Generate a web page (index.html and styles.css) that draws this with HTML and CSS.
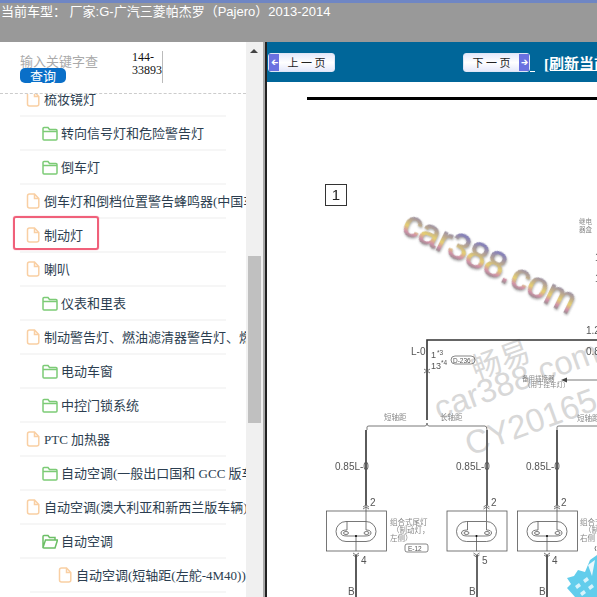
FILE: index.html
```html
<!DOCTYPE html>
<html lang="zh-CN">
<head>
    <meta charset="UTF-8">
    <meta name="viewport" content="width=device-width, initial-scale=1.0">
    <title>当前车型</title>
    <link rel="stylesheet" href="styles.css">
</head>
<body>
    <svg class="defs" width="0" height="0">
        <symbol id="file" viewBox="0 0 14 16">
            <path d="M1.5 3 Q1.5 1 3.5 1 H8.5 L12.8 5.5 V13 Q12.8 15 10.8 15 H3.5 Q1.5 15 1.5 13 Z M8.5 1 V5.5 H12.8" fill="none" stroke="#f9cfa3" stroke-width="1.5"/>
        </symbol>
        <symbol id="folder" viewBox="0 0 16 15">
            <path d="M1 13 V2.5 Q1 1.5 2 1.5 H6 L7.5 3.5 H14 Q15 3.5 15 4.5 V13 Q15 14 14 14 H2 Q1 14 1 13 Z M1 5.5 H15" fill="none" stroke="#7ccb76" stroke-width="1.5"/>
        </symbol>
        <symbol id="folder-open" viewBox="0 0 16 15">
            <path d="M1 13 V2.5 Q1 1.5 2 1.5 H6 L7.5 3.5 H13 V6 M1 13.5 L3.5 6 H15.5 L13 14 H2 Z" fill="none" stroke="#6cbf66" stroke-width="1.5"/>
        </symbol>
    </svg>

    <div class="topbar">当前车型： 厂家:G-广汽三菱帕杰罗（Pajero）2013-2014</div>

    <div class="main">
        <div class="sidebar">
            <div class="side-col">
                <div class="search">
                    <div class="search-left">
                        <div class="placeholder">输入关键字查</div>
                        <div class="search-btn">查询</div>
                    </div>
                    <div class="counter">144-<br>33893</div>
                </div>
                <div class="tree">
                    <ul class="tree-list">
                        <li class="row"><svg class="icon-file"><use href="#file"/></svg><span>梳妆镜灯</span></li>
                        <li class="row sub"><svg class="icon-folder"><use href="#folder"/></svg><span>转向信号灯和危险警告灯</span></li>
                        <li class="row sub"><svg class="icon-folder"><use href="#folder"/></svg><span>倒车灯</span></li>
                        <li class="row"><svg class="icon-file"><use href="#file"/></svg><span>倒车灯和倒档位置警告蜂鸣器(中国车型)</span></li>
                        <li class="row marked"><svg class="icon-file"><use href="#file"/></svg><span>制动灯</span></li>
                        <li class="row"><svg class="icon-file"><use href="#file"/></svg><span>喇叭</span></li>
                        <li class="row sub"><svg class="icon-folder"><use href="#folder"/></svg><span>仪表和里表</span></li>
                        <li class="row"><svg class="icon-file"><use href="#file"/></svg><span>制动警告灯、燃油滤清器警告灯、燃油</span></li>
                        <li class="row sub"><svg class="icon-folder"><use href="#folder"/></svg><span>电动车窗</span></li>
                        <li class="row sub"><svg class="icon-folder"><use href="#folder"/></svg><span>中控门锁系统</span></li>
                        <li class="row"><svg class="icon-file"><use href="#file"/></svg><span>PTC 加热器</span></li>
                        <li class="row sub"><svg class="icon-folder"><use href="#folder"/></svg><span>自动空调(一般出口国和 GCC 版车辆)</span></li>
                        <li class="row"><svg class="icon-file"><use href="#file"/></svg><span>自动空调(澳大利亚和新西兰版车辆)</span></li>
                        <li class="row sub"><svg class="icon-folder"><use href="#folder-open"/></svg><span>自动空调</span></li>
                        <li class="row leaf"><svg class="icon-file"><use href="#file"/></svg><span>自动空调(短轴距(左舵-4M40))</span></li>
                    </ul>
                </div>
            </div>
            <div class="scrollbar">
                <div class="scroll-up"></div>
                <div class="scroll-thumb"></div>
            </div>
        </div>

        <div class="viewer">
            <div class="toolbar">
                <div class="page-btn prev"><span class="arrow">&#129136;</span><span class="page-label">上 一 页</span></div>
                <div class="page-btn next"><span class="page-label">下 一 页</span><span class="arrow">&#129138;</span></div>
                <span class="spacer-link"></span>
                <a class="refresh">[刷新当前页]</a>
            </div>

            <svg class="diagram" viewBox="267 82 330 515">
                <defs>
                    <linearGradient id="rainbow" x1="0" y1="0" x2="0" y2="1">
                        <stop offset="0.2" stop-color="#8580b8"/>
                        <stop offset="0.42" stop-color="#b9a690"/>
                        <stop offset="0.58" stop-color="#e6d070"/>
                        <stop offset="0.72" stop-color="#d292a8"/>
                        <stop offset="0.85" stop-color="#8a8a8a"/>
                    </linearGradient>
                </defs>

                <text class="cut-text" x="312" y="82">·· ·· ··· ··· ·</text>
                <rect x="307" y="97" width="290" height="3" fill="#000"/>

                <text class="mark grey-mark" transform="translate(476 380) rotate(-20)">畅易</text>
                <text class="mark wide-mark" transform="translate(439 420) rotate(-20)">car388.com</text>
                <text class="mark wide-mark" transform="translate(470 456) rotate(-20)">CY20165</text>

                <g class="drawing">
                    <rect class="num-box" x="325.5" y="184.5" width="21" height="21"/>
                    <text class="num" x="336" y="200" text-anchor="middle">1</text>

                    <text class="cn" x="579" y="224">继电</text>
                    <text class="cn" x="579" y="232">器盒</text>
                    <text class="lbl" x="595" y="261">1</text>
                    <text class="lbl" x="595" y="282">1</text>
                    <text class="lbl" x="586" y="334">1.2</text>
                    <text class="lbl" x="586" y="355">0.8</text>

                    <!-- main feed -->
                    <path class="wire" d="M597 340 H427 V420"/>
                    <path class="thin" d="M424 369 L430 373 M430 369 L424 373"/>
                    <path class="thin" d="M367 430 V427 Q367 426 369 426 H425 Q427 426 427 423 Q427 426 429 426 H485 Q487 426 487 430"/>
                    <path class="thin" d="M557 430 V427 Q557 426 559 426 H597"/>
                    <text class="lbl" x="411" y="355">L-0</text>
                    <text class="small" x="431" y="358">1</text>
                    <text class="tiny" x="437" y="355">*3</text>
                    <text class="small" x="431" y="369">13</text>
                    <text class="tiny" x="441" y="365">*4</text>
                    <rect class="tag" x="451" y="356" width="24" height="8" rx="4"/>
                    <text class="tiny" x="453" y="363">D-236</text>
                    <text class="cn" x="522" y="381">备用插接器</text>
                    <text class="cn" x="524" y="387">（用于挂车灯）</text>
                    <path class="thin" d="M566 380 H597"/>
                    <path d="M561 380 L567 377.5 V382.5 Z" fill="#444"/>
                    <text class="cn mid" x="384" y="420">短轴距</text>
                    <text class="cn mid" x="440" y="420">长轴距</text>
                    <text class="cn mid" x="577" y="421">短轴距</text>

                    <!-- three lamps -->
                    <path class="wire" d="M366 430 V505"/>
                    <path class="wire grey" d="M487 430 V505"/>
                    <path class="wire" d="M557 430 V505"/>
                    <path class="wire" d="M356 555 V597"/>
                    <path class="wire grey" d="M477 555 V597"/>
                    <path class="wire" d="M547 555 V597"/>

                    <text class="lbl" x="335" y="470">0.85L-0</text>
                    <text class="lbl" x="456" y="470">0.85L-0</text>
                    <text class="lbl" x="526" y="470">0.85L-0</text>
                    <text class="lbl" x="370" y="506">2</text>
                    <text class="lbl" x="491" y="506">2</text>
                    <text class="lbl" x="561" y="506">2</text>
                    <text class="lbl" x="361" y="564">4</text>
                    <text class="lbl" x="482" y="564">5</text>
                    <text class="lbl" x="552" y="564">4</text>
                    <text class="lbl" x="348" y="595">B</text>
                    <text class="lbl" x="469" y="595">B</text>
                    <text class="lbl" x="539" y="595">B</text>

                    <g id="lamp">
                        <rect class="thin" x="326.5" y="511" width="60" height="40"/>
                        <rect class="thin" x="336" y="521.5" width="40" height="20" rx="10"/>
                        <path class="thin" d="M347 521.5 V530 Q341 530 341 533 Q341 536 347 536 H365 Q371 536 371 533 Q371 530 366 530 V521.5 M366 505 V521 M356 536 V551"/>
                        <ellipse class="thin" cx="346" cy="533" rx="2.5" ry="1.5"/>
                        <ellipse class="thin" cx="366.5" cy="533" rx="2.5" ry="1.5"/>
                        <circle cx="356" cy="536" r="1" fill="#000"/>
                        <path class="thin" d="M363 507 L366 505 L369 507 M363 509 L366 507 L369 509 M353 555 L356 557 L359 555 M353 553 L356 555 L359 553"/>
                    </g>
                    <use href="#lamp" x="120.5"/>
                    <use href="#lamp" x="191"/>

                    <text class="cn big" x="390" y="525">组合式尾灯</text>
                    <text class="cn big" x="392" y="533">（制动灯，</text>
                    <text class="cn big" x="390" y="541">左侧）</text>
                    <rect class="tag" x="405" y="544" width="23" height="8" rx="2"/>
                    <text class="tiny" x="408" y="551">E-12</text>
                    <text class="cn big" x="580" y="525">组合式尾灯</text>
                    <text class="cn big" x="584" y="533">（制动灯，</text>
                    <text class="cn big" x="580" y="541">右侧</text>
                    <path class="thin" d="M596 546 Q594 548 596 551"/>
                </g>

                <text class="rainbow" transform="translate(400 232) rotate(26)">car388.com</text>

                <!-- corner badge -->
                <path d="M597 555 L590 560 L585 572 L578 570 L574 576 L567 578 L571 584 L567 588 L575 597 H597 Z" fill="#62cdec"/>
                <path d="M575 586 l4 -3 l2 3 l-4 3 Z M583 580 l4 -3 l2 3 l-4 3 Z M580 593 l4 -3 l2 3 l-4 3 Z M588 587 l4 -3 l2 3 l-4 3 Z" fill="#d8f3fb"/>
                <path d="M588 565 L595 560 L592 576 Z" fill="#e8f8fd"/>
            </svg>
        </div>
    </div>
</body>
</html>
```

FILE: styles.css
```css
html, body {
    margin: 0;
    padding: 0;
    height: 597px;
    overflow: hidden;
    background-color: #fff;
}
body {
    display: flex;
    flex-direction: column;
    font-family: "Liberation Serif", "Noto Sans CJK SC", serif;
}
.defs {
    position: absolute;
}

/* top bar */
.topbar {
    height: 39px;
    flex: none;
    background-color: #999;
    border-top: 3px solid #6f86c4;
    padding-left: 1px;
    color: #fff;
    font-family: "Liberation Sans", "Noto Sans CJK SC", sans-serif;
    font-size: 13px;
    line-height: 18px;
    white-space: pre;
}
.main {
    flex: 1;
    display: flex;
    min-height: 0;
}

/* left side */
.sidebar {
    width: 263px;
    flex: none;
    display: flex;
    border-right: 2px solid #a8a8a8;
}
.side-col {
    width: 246px;
    flex: none;
    display: flex;
    flex-direction: column;
}
.search {
    height: 52px;
    flex: none;
    display: flex;
    align-items: flex-end;
    padding: 0 0 10px 20px;
    box-sizing: border-box;
    border-bottom: 1px dashed #ccc;
}
.search-left {
    width: 112px;
    flex: none;
}
.placeholder {
    color: #aaa;
    font-family: "Noto Sans CJK SC", sans-serif;
    font-size: 13px;
    line-height: 14px;
}
.search-btn {
    width: 46px;
    height: 15px;
    background-color: #0a6fc8;
    border-radius: 5px;
    color: #fff;
    font-family: "Noto Sans CJK SC", sans-serif;
    font-size: 13px;
    line-height: 15px;
    text-align: center;
}
.counter {
    width: 30px;
    height: 32px;
    border-right: 1px solid #bbb;
    color: #111;
    font-size: 12px;
    line-height: 13px;
}
.tree {
    flex: 1;
    overflow: hidden;
}
.tree-list {
    list-style: none;
    margin: -11px 0 0;
    padding: 0 20px;
}
.row {
    position: relative;
    height: 32px;
    display: flex;
    align-items: center;
    border-bottom: 2px solid #f6f6f6;
    padding-left: 6px;
    color: #2c3e50;
    font-size: 13px;
    white-space: nowrap;
}
.row span {
    margin: -2px 0 0 4px;
}
.row.sub {
    padding-left: 22px;
}
.row.sub span {
    margin-left: 3px;
}
.row.leaf {
    margin-left: 10px;
    padding-left: 28px;
}
.icon-file {
    width: 14px;
    height: 16px;
    flex: none;
}
.icon-folder {
    width: 16px;
    height: 15px;
    flex: none;
}
.row.marked::after {
    content: "";
    position: absolute;
    left: -7px;
    top: -3px;
    width: 82px;
    height: 30px;
    border: 2px solid #f0607a;
    border-radius: 3px;
    box-shadow: 0 0 1px #f0607a;
}

.scrollbar {
    flex: 1;
    background-color: #f0f0f0;
    padding: 7px 2px 0;
}
.scroll-up {
    width: 0;
    height: 0;
    margin-left: 2px;
    border-left: 4px solid transparent;
    border-right: 4px solid transparent;
    border-bottom: 4px solid #444;
}
.scroll-thumb {
    height: 167px;
    margin-top: 203px;
    background-color: #c0c0c0;
}

/* right side */
.viewer {
    flex: 1;
    display: flex;
    flex-direction: column;
    min-width: 0;
    border-left: 2px solid #222;
}
.toolbar {
    height: 40px;
    flex: none;
    display: flex;
    align-items: center;
    background-color: #006699;
    padding-left: 1px;
    white-space: nowrap;
    overflow: hidden;
}
.page-btn {
    width: 67px;
    height: 19px;
    flex: none;
    display: flex;
    align-items: center;
    box-sizing: border-box;
    border: 1px solid #dfe6f5;
    border-radius: 3px;
    background: linear-gradient(to bottom, #e6e9fb, #fff 50%, #e6e9fb);
    color: #222;
    font-family: "Noto Sans CJK SC", sans-serif;
    font-size: 11px;
}
.page-label {
    flex: 1;
    text-align: center;
}
.arrow {
    width: 10px;
    height: 100%;
    background-color: #6a70e0;
    color: #fff;
    font-family: "DejaVu Sans", sans-serif;
    font-size: 9px;
    line-height: 17px;
    text-align: center;
}
.next {
    margin-left: 128px;
}
.spacer-link {
    width: 5px;
    height: 19px;
    flex: none;
    box-sizing: border-box;
    border-bottom: 1px solid #fff;
}
.refresh {
    margin-left: 9px;
    color: #fff;
    font-size: 15px;
    font-weight: bold;
    text-decoration: underline;
}
.diagram {
    width: 330px;
    height: 515px;
    flex: none;
    display: block;
}

/* wiring diagram */
.drawing {
    filter: blur(0.35px);
}
.drawing text {
    font-family: "Liberation Sans", "Noto Sans CJK SC", sans-serif;
    fill: #555;
}
.cut-text {
    font-family: "Liberation Sans", sans-serif;
    font-size: 12px;
    fill: #999;
    letter-spacing: 1px;
}
.num-box {
    fill: none;
    stroke: #333;
}
.drawing .num {
    font-size: 15px;
    fill: #222;
}
.wire {
    fill: none;
    stroke: #333;
    stroke-width: 1.6;
}
.wire.grey {
    stroke: #666;
    stroke-width: 2;
}
.thin {
    fill: none;
    stroke: #555;
    stroke-width: 0.8;
}
.tag {
    fill: none;
    stroke: #555;
    stroke-width: 0.7;
}
.drawing .lbl {
    font-size: 10px;
}
.drawing .small {
    font-size: 9px;
}
.drawing .tiny {
    font-size: 6.5px;
}
.drawing .cn {
    font-size: 6.5px;
    fill: #888;
}
.drawing .cn.mid {
    font-size: 7.5px;
}
.drawing .cn.big {
    font-size: 7.5px;
}
.mark {
    font-family: "Liberation Sans", "Noto Sans CJK SC", sans-serif;
    fill: #d8d8d8;
}
.grey-mark {
    font-size: 30px;
}
.wide-mark {
    font-size: 33px;
}
.rainbow {
    font-family: "Liberation Sans", sans-serif;
    font-size: 36px;
    fill: url(#rainbow);
    stroke: url(#rainbow);
    stroke-width: 0.8;
    filter: drop-shadow(1px 1px 1px #aaa);
}
```
